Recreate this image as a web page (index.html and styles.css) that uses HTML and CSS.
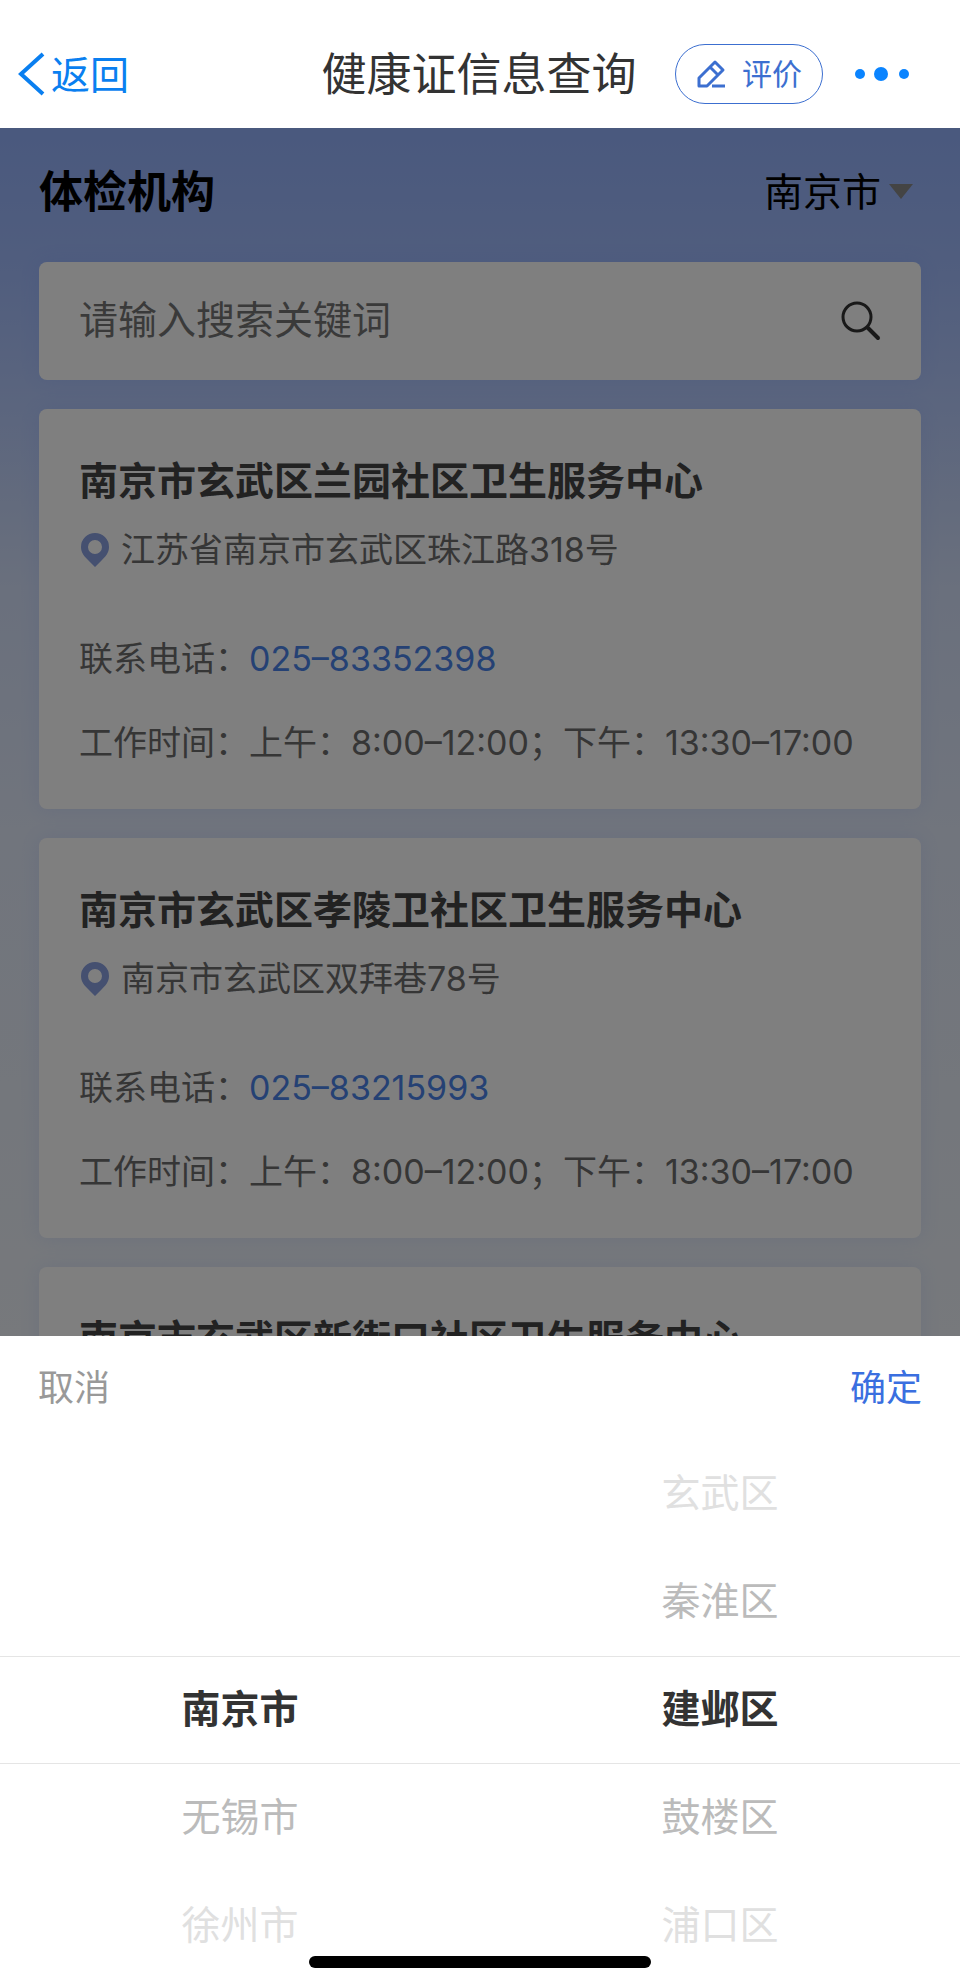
FILE: index.html
```html
<!DOCTYPE html>
<html lang="zh-CN">

<head>
    <meta charset="UTF-8">
    <meta name="viewport" content="width=device-width, initial-scale=1.0">
    <title>健康证信息查询</title>
    <link rel="stylesheet" href="styles.css">
</head>

<body>
    <div class="app">
        <header class="navbar">
            <button type="button" class="back">
                <svg width="28" height="44" viewBox="0 0 28 44" aria-hidden="true">
                    <path d="M25 2 3 22l22 20" fill="none" stroke="currentColor" stroke-width="4" />
                </svg>
                <span class="label">返回</span>
            </button>
            <h1 class="label">健康证信息查询</h1>
            <div class="actions">
                <button type="button" class="rate">
                    <svg width="30" height="30" viewBox="0 0 30 30" aria-hidden="true">
                        <path d="M3 27v-8L19 3l8 8L11 27z M14 8l8 8 M16 27h13" fill="none" stroke="currentColor" stroke-width="3" stroke-linejoin="round" />
                    </svg>
                    <span class="label">评价</span>
                </button>
                <button type="button" class="more" aria-label="更多">
                    <svg width="54" height="16" viewBox="0 0 54 16" aria-hidden="true">
                        <circle cx="5" cy="8" r="5" />
                        <circle cx="26" cy="8" r="7" />
                        <circle cx="49" cy="8" r="5" />
                    </svg>
                </button>
            </div>
        </header>

        <main class="content">
            <div class="section-head">
                <h2>体检机构</h2>
                <button type="button" class="city">南京市</button>
            </div>

            <form class="search">
                <input type="text" placeholder="请输入搜索关键词" aria-label="搜索关键词">
                <button type="submit" aria-label="搜索">
                    <svg width="40" height="40" viewBox="0 0 40 40" aria-hidden="true">
                        <circle cx="16" cy="16" r="14" fill="none" stroke="currentColor" stroke-width="3" />
                        <path d="M27 27l10 10" stroke="currentColor" stroke-width="4" stroke-linecap="round" />
                    </svg>
                </button>
            </form>

            <article class="card">
                <h3>南京市玄武区兰园社区卫生服务中心</h3>
                <p class="address">
                    <svg width="28" height="34" viewBox="0 0 28 34" aria-hidden="true">
                        <path d="M14 0a14 14 0 0 0-14 14c0 6 4 10 7 13l7 7 7-7c3-3 7-7 7-13A14 14 0 0 0 14 0zm0 7a7 7 0 1 1 0 14 7 7 0 0 1 0-14z" />
                    </svg>
                    江苏省南京市玄武区珠江路318号
                </p>
                <p class="row">联系电话：<a href="tel:025-83352398">025–83352398</a></p>
                <p class="row">工作时间：上午：8:00–12:00；下午：13:30–17:00</p>
            </article>

            <article class="card">
                <h3>南京市玄武区孝陵卫社区卫生服务中心</h3>
                <p class="address">
                    <svg width="28" height="34" viewBox="0 0 28 34" aria-hidden="true">
                        <path d="M14 0a14 14 0 0 0-14 14c0 6 4 10 7 13l7 7 7-7c3-3 7-7 7-13A14 14 0 0 0 14 0zm0 7a7 7 0 1 1 0 14 7 7 0 0 1 0-14z" />
                    </svg>
                    南京市玄武区双拜巷78号
                </p>
                <p class="row">联系电话：<a href="tel:025-83215993">025–83215993</a></p>
                <p class="row">工作时间：上午：8:00–12:00；下午：13:30–17:00</p>
            </article>

            <article class="card">
                <h3>南京市玄武区新街口社区卫生服务中心</h3>
            </article>
        </main>

        <section class="picker">
            <div class="toolbar">
                <button type="button" class="cancel">取消</button>
                <button type="button" class="confirm">确定</button>
            </div>
            <div class="columns">
                <ul class="cities">
                    <li class="selected">南京市</li>
                    <li>无锡市</li>
                    <li class="far">徐州市</li>
                </ul>
                <ul>
                    <li class="far">玄武区</li>
                    <li>秦淮区</li>
                    <li class="selected">建邺区</li>
                    <li>鼓楼区</li>
                    <li class="far">浦口区</li>
                </ul>
            </div>
            <div class="home-bar"></div>
        </section>
    </div>
</body>

</html>
```
FILE: styles.css
```css
* {
    box-sizing: border-box;
}

body {
    margin: 0;
    font-family: "Noto Sans CJK SC", sans-serif;
    color: #333;
    background-color: #fff;
}

h1,
h2,
h3,
p,
ul {
    margin: 0;
    padding: 0;
}

button {
    padding: 0;
    border: none;
    background: none;
    font-family: inherit;
    color: inherit;
    cursor: pointer;
}

.app {
    display: flex;
    flex-direction: column;
    height: 100vh;
}

/* top bar */
.navbar {
    display: grid;
    grid-template-columns: 1fr auto 1fr;
    align-items: center;
    height: 128px;
    padding: 20px 20px 0 18px;
}

.navbar h1 {
    font-size: 45px;
    font-weight: 400;
    line-height: 64px;
}

.navbar .label {
    padding-bottom: 5px;
}

.back {
    display: flex;
    align-items: center;
    gap: 5px;
    font-size: 39px;
    color: #0a7ff0;
}

.actions {
    display: flex;
    align-items: center;
    justify-content: flex-end;
    gap: 32px;
    padding-right: 31px;
}

.rate {
    display: flex;
    align-items: center;
    gap: 16px;
    height: 60px;
    padding: 0 20px;
    border: 1px solid #3c6fd0;
    border-radius: 30px;
    font-size: 30px;
    color: #3c6fd0;
}

.more {
    display: flex;
    fill: #0a84ff;
}

/* list behind the picker */
.content {
    position: relative;
    flex: 1;
    min-height: 0;
    overflow: hidden;
    display: flex;
    flex-direction: column;
    gap: 29px;
    padding: 0 39px;
    background: linear-gradient(#94b2fc 0%, #a2bcfc 12%, #b8ccfc 24%, #d4e0fa 38%, #e2eafa 58%, #eef2f8 100%);
}

/* dark mask */
.content::after {
    content: "";
    position: absolute;
    inset: 0;
    background-color: rgba(0, 0, 0, 0.5);
}

.section-head {
    display: flex;
    flex-shrink: 0;
    align-items: center;
    justify-content: space-between;
    height: 105px;
    padding-top: 16px;
    color: #000;
}

.section-head h2 {
    font-size: 44px;
    font-weight: 700;
}

.city {
    display: flex;
    align-items: center;
    gap: 8px;
    padding-right: 8px;
    font-size: 39px;
}

.city::after {
    content: "";
    margin-top: 6px;
    border: 12px solid transparent;
    border-top: 15px solid #888;
    border-bottom: none;
}

.search,
.card {
    flex-shrink: 0;
    border-radius: 8px;
    background-color: #fff;
    box-shadow: 0 0 20px rgba(90, 130, 255, 0.12);
}

.search {
    display: flex;
    align-items: center;
    height: 118px;
    padding: 0 40px;
}

.search input {
    flex: 1;
    min-width: 0;
    padding: 0 0 8px;
    border: none;
    outline: none;
    background: none;
    font-family: inherit;
    font-size: 39px;
}

.search input::placeholder {
    color: #757575;
}

.search button {
    display: flex;
    color: #333;
}

.card {
    padding: 45px 40px 24px;
}

.card h3 {
    font-size: 39px;
    font-weight: 700;
    line-height: 48px;
    color: #444;
}

.address,
.row {
    font-family: Inter, "Noto Sans CJK SC", sans-serif;
    font-size: 34px;
    color: #6c6c6c;
    white-space: nowrap;
}

.address {
    display: flex;
    align-items: center;
    gap: 12px;
    margin: 24px 0 43px;
    padding-left: 2px;
    line-height: 48px;
}

.address svg {
    fill: #8aa0e0;
}

.row {
    line-height: 84px;
}

.row a {
    color: #4a83e8;
    text-decoration: none;
}

/* bottom picker */
.picker {
    position: relative;
    padding-bottom: 8px;
}

.toolbar {
    display: flex;
    align-items: center;
    justify-content: space-between;
    height: 104px;
    padding: 0 38px 6px;
}

.toolbar button {
    font-size: 36px;
}

.cancel {
    color: #999;
}

.confirm {
    color: #3a6fe0;
}

.columns {
    display: grid;
    grid-template-columns: 1fr 1fr;
    background: linear-gradient(#e5e5e5, #e5e5e5) 0 216px / 100% 1px no-repeat, linear-gradient(#e5e5e5, #e5e5e5) 0 323px / 100% 1px no-repeat;
}

.columns ul {
    list-style: none;
    text-align: center;
    font-size: 39px;
    line-height: 100px;
    color: #bbb;
}

.columns li {
    padding-bottom: 8px;
}

.columns .cities {
    padding-top: 216px;
}

.columns .far {
    color: #e0e0e0;
}

.columns .selected {
    font-weight: 700;
    color: #333;
}

.home-bar {
    position: absolute;
    left: 50%;
    bottom: 20px;
    width: 342px;
    height: 12px;
    margin-left: -171px;
    border-radius: 6px;
    background-color: #000;
}
```
